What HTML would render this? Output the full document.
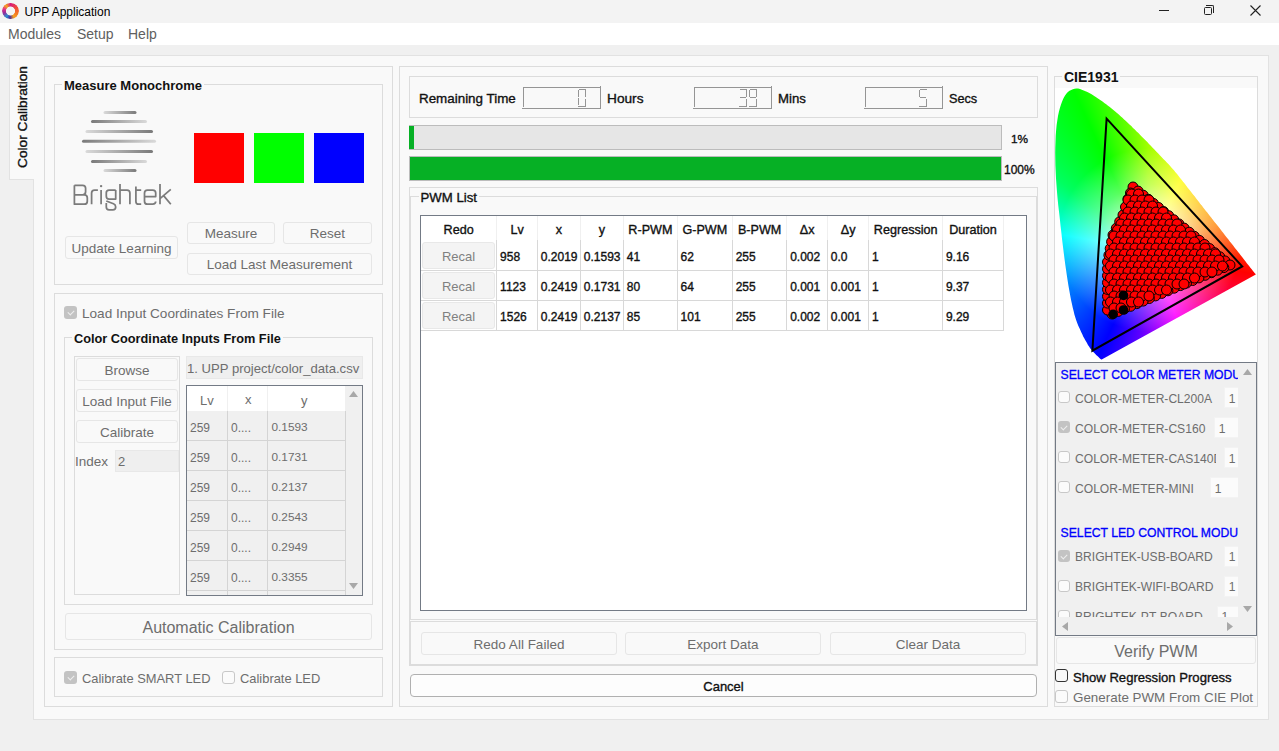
<!DOCTYPE html>
<html><head><meta charset="utf-8">
<style>
*{box-sizing:border-box;margin:0;padding:0}
html,body{width:1279px;height:751px;overflow:hidden;background:#f0f0f0;font-family:"Liberation Sans",sans-serif;font-size:13px;color:#000}
.a{position:absolute}
.t{position:absolute;white-space:nowrap;line-height:1}
.gb{position:absolute;border:1px solid #dcdcdc}
.btn{position:absolute;border:1px solid #e6e6e6;border-radius:3px;background:#f9f9f9;color:#6d6d6d;text-align:center;white-space:nowrap;font-size:13.5px;padding-top:1px}
.sb{-webkit-text-stroke:0.35px currentColor}
.cb{position:absolute;width:13px;height:13px;border:1px solid #c8c8c8;border-radius:3px;background:#fbfbfb}
.cbc{position:absolute;width:13px;height:13px;border-radius:3px;background:#c3c3c3}
.cbc:after{content:"";position:absolute;left:3px;top:2px;width:5px;height:3px;border-left:1px solid #eee;border-bottom:1px solid #eee;transform:rotate(-45deg);transform-origin:center;top:4px;left:3.5px}
.g{color:#6d6d6d}
</style></head><body>
<!-- title bar -->
<div class="a" style="left:0;top:0;width:1279px;height:23px;background:#f3f3f3"></div>
<div class="a" style="left:2px;top:2.5px;width:16.5px;height:16.5px;border-radius:50%;background:conic-gradient(#d81b7a 0deg,#f04a3a 60deg,#f57f20 120deg,#f7a020 150deg,#4a2a98 185deg,#2a8fd0 215deg,#9a2a98 255deg,#e0308a 285deg,#f7a81b 320deg,#d81b7a 360deg);-webkit-mask:radial-gradient(circle,transparent 4.2px,#000 4.8px)"></div>
<div class="t" style="left:24.5px;top:6px;font-size:12px;color:#000">UPP Application</div>
<div class="a" style="left:1159px;top:10px;width:10px;height:1px;background:#222"></div>
<div class="a" style="left:1204px;top:7px;width:8px;height:8px;border:1px solid #222;border-radius:1.5px"></div>
<div class="a" style="left:1206px;top:5px;width:8px;height:8px;border-top:1px solid #222;border-right:1px solid #222;border-radius:0 2px 0 0"></div>
<svg class="a" style="left:1250px;top:5px" width="11" height="11" viewBox="0 0 11 11"><path d="M0.5 0.5 L10.5 10.5 M10.5 0.5 L0.5 10.5" stroke="#222" stroke-width="1.1"/></svg>
<!-- menu -->
<div class="a" style="left:0;top:23px;width:1279px;height:22px;background:#fff"></div>
<div class="t" style="left:8px;top:27px;font-size:14px;color:#606060">Modules</div>
<div class="t" style="left:77px;top:27px;font-size:14px;color:#606060">Setup</div>
<div class="t" style="left:128px;top:27px;font-size:14px;color:#606060">Help</div>

<!-- tab widget -->
<div class="a" style="left:33px;top:55px;width:1236px;height:665px;background:#f9f9f9;border:1px solid #e2e2e2"></div>
<div class="a" style="left:9px;top:55px;width:25px;height:125px;background:#f9f9f9;border:1px solid #e2e2e2;border-right:none"></div>
<div class="t sb" style="left:16px;top:168px;font-size:13.7px;transform:rotate(-90deg);transform-origin:0 0;color:#111">Color Calibration</div>

<!-- LEFT PANEL -->
<div class="gb" style="left:44px;top:66px;width:349px;height:641px"></div>
<!-- Measure monochrome -->
<div class="gb" style="left:54px;top:84px;width:329px;height:201px"></div>
<div class="t" style="left:62px;top:79px;font-size:13px;font-weight:bold;background:#f9f9f9;padding:0 2px;color:#111">Measure Monochrome</div>
<svg class="a" style="left:80px;top:108px" width="80" height="68" viewBox="0 0 80 68">
<defs>
<linearGradient id="lg1" gradientUnits="objectBoundingBox" x1="0" x2="1" y1="0" y2="0"><stop offset="0" stop-color="#dadada"/><stop offset="1" stop-color="#7a7a7a"/></linearGradient>
<linearGradient id="lg2" gradientUnits="objectBoundingBox" x1="0" x2="1" y1="0" y2="0"><stop offset="0" stop-color="#7a7a7a"/><stop offset="1" stop-color="#dadada"/></linearGradient>
</defs>
<rect x="23.5" y="3" width="33" height="3" rx="1.5" fill="url(#lg1)"/>
<rect x="11" y="12" width="56" height="3" rx="1.5" fill="url(#lg2)"/>
<rect x="5.5" y="22" width="67.5" height="3" rx="1.5" fill="url(#lg1)"/>
<rect x="2" y="31.7" width="74" height="3" rx="1.5" fill="url(#lg2)"/>
<rect x="5.5" y="42" width="67.5" height="3" rx="1.5" fill="url(#lg1)"/>
<rect x="11" y="52" width="56" height="3" rx="1.5" fill="url(#lg2)"/>
<rect x="23.5" y="61" width="33" height="3" rx="1.5" fill="url(#lg1)"/>
</svg>
<svg class="a" style="left:0;top:0" width="200" height="220" viewBox="0 0 200 220"><g fill="none" stroke="#7b7b7b" stroke-width="1.75" stroke-linecap="butt" stroke-linejoin="round">
<path d="M74.4,185.3 H82.6 Q85.6,185.3 85.6,188.3 V191.8 Q85.6,194.8 82.6,194.8 H74.4 M82.6,194.8 H84.3 Q87.3,194.8 87.3,197.8 V201.2 Q87.3,204.2 84.3,204.2 H74.4 V185.3"/>
<path d="M91.6,204.2 V193 Q91.6,190 94.6,190 H97.9"/>
<path d="M101.1,190 V204.2"/>
<path d="M115.7,190 H109.1 Q106.3,190 106.3,192.8 V196.2 Q106.3,199 109.1,199 H115.7 V190 M106.3,201 L113.5,203.7 Q115.7,204.6 115.7,207 Q115.7,209.8 112.9,209.8 H109.1 Q106.3,209.8 106.3,207 V203"/>
<path d="M120,184 V204.2 M120,190 H127 Q129.9,190 129.9,193 V204.2"/>
<path d="M135.9,186.4 V201.4 Q135.9,204.2 138.7,204.2 H141.2 M135.9,190 H141.2"/>
<path d="M144.5,196.5 H155.7 V193 Q155.7,190 152.7,190 H147.5 Q144.5,190 144.5,193 V201.2 Q144.5,204.2 147.5,204.2 H152.7 Q155.7,204.2 155.7,201.6"/>
<path d="M160,184 V204.2 M160,198.6 L170.8,189.4 M163.6,195.6 L170.8,204.2"/>
</g><circle cx="101.1" cy="186.1" r="1.2" fill="#7b7b7b"/></svg>
<div class="a" style="left:194px;top:133px;width:50px;height:50px;background:#ff0000"></div>
<div class="a" style="left:254px;top:133px;width:50px;height:50px;background:#00ff00"></div>
<div class="a" style="left:314px;top:133px;width:50px;height:50px;background:#0000ff"></div>
<div class="btn" style="left:65px;top:236px;width:113px;height:23px;line-height:21px">Update Learning</div>
<div class="btn" style="left:187px;top:222px;width:88px;height:22px;line-height:20px">Measure</div>
<div class="btn" style="left:283px;top:222px;width:89px;height:22px;line-height:20px">Reset</div>
<div class="btn" style="left:187px;top:253px;width:185px;height:22px;line-height:20px">Load Last Measurement</div>

<!-- Load input group -->
<div class="gb" style="left:54px;top:293px;width:329px;height:357px"></div>
<div class="cbc" style="left:64px;top:306px"></div>
<div class="t g" style="left:82px;top:307px;font-size:13.6px">Load Input Coordinates From File</div>
<div class="gb" style="left:64px;top:337px;width:309px;height:268px"></div>
<div class="t" style="left:72px;top:333px;font-size:12.75px;font-weight:bold;background:#f9f9f9;padding:0 2px;color:#111">Color Coordinate Inputs From File</div>
<div class="gb" style="left:74px;top:356px;width:106px;height:239px"></div>
<div class="btn" style="left:76px;top:358px;width:102px;height:23px;line-height:21px">Browse</div>
<div class="btn" style="left:76px;top:389px;width:102px;height:23px;line-height:21px">Load Input File</div>
<div class="btn" style="left:76px;top:420px;width:102px;height:23px;line-height:21px">Calibrate</div>
<div class="t g" style="left:75px;top:455px;font-size:13.5px">Index</div>
<div class="a" style="left:115px;top:450px;width:64px;height:22px;background:#efefef;border:1px solid #e8e8e8"></div>
<div class="t g" style="left:118px;top:455px;font-size:13px">2</div>
<div class="a" style="left:186px;top:356px;width:177px;height:23px;background:#efefef;border:1px solid #e8e8e8"></div>
<div class="t g" style="left:187px;top:362px;font-size:13.1px">1. UPP project/color_data.csv</div>

<!-- small table -->
<div class="a" style="left:186px;top:385px;width:177px;height:211px;border:1px solid #737a85;background:#f0f0f0;overflow:hidden">
  <div class="a" style="left:0;top:0;width:158px;height:25px;background:#fff"></div>
  <div class="a" style="left:40px;top:0;width:1px;height:210px;background:#d4d4d4"></div>
  <div class="a" style="left:80px;top:0;width:1px;height:210px;background:#d4d4d4"></div>
  <div class="a" style="left:0;top:0;width:158px;height:25px;background:#fff"></div>
  <div class="a" style="left:40px;top:0;width:1px;height:25px;background:#f0f0f0"></div>
  <div class="a" style="left:80px;top:0;width:1px;height:25px;background:#f0f0f0"></div>
  <div class="a" style="left:157.5px;top:25px;width:1px;height:190px;background:#d4d4d4"></div>
  <div class="t g" style="left:13px;top:8px;font-size:13px">Lv</div>
  <div class="t g" style="left:58px;top:7px;font-size:13px">x</div>
  <div class="t g" style="left:114px;top:8px;font-size:13px">y</div>
</div>
<div class="a" style="left:187px;top:440px;width:158px;height:1px;background:#d4d4d4"></div>
<div class="t g" style="left:190px;top:421.5px;font-size:12px">259</div>
<div class="t g" style="left:231px;top:421.5px;font-size:12px">0....</div>
<div class="t g" style="left:271.5px;top:421.5px;font-size:11.8px">0.1593</div>
<div class="a" style="left:187px;top:470px;width:158px;height:1px;background:#d4d4d4"></div>
<div class="t g" style="left:190px;top:451.5px;font-size:12px">259</div>
<div class="t g" style="left:231px;top:451.5px;font-size:12px">0....</div>
<div class="t g" style="left:271.5px;top:451.5px;font-size:11.8px">0.1731</div>
<div class="a" style="left:187px;top:500px;width:158px;height:1px;background:#d4d4d4"></div>
<div class="t g" style="left:190px;top:481.5px;font-size:12px">259</div>
<div class="t g" style="left:231px;top:481.5px;font-size:12px">0....</div>
<div class="t g" style="left:271.5px;top:481.5px;font-size:11.8px">0.2137</div>
<div class="a" style="left:187px;top:530px;width:158px;height:1px;background:#d4d4d4"></div>
<div class="t g" style="left:190px;top:511.5px;font-size:12px">259</div>
<div class="t g" style="left:231px;top:511.5px;font-size:12px">0....</div>
<div class="t g" style="left:271.5px;top:511.5px;font-size:11.8px">0.2543</div>
<div class="a" style="left:187px;top:560px;width:158px;height:1px;background:#d4d4d4"></div>
<div class="t g" style="left:190px;top:541.5px;font-size:12px">259</div>
<div class="t g" style="left:231px;top:541.5px;font-size:12px">0....</div>
<div class="t g" style="left:271.5px;top:541.5px;font-size:11.8px">0.2949</div>
<div class="a" style="left:187px;top:590px;width:158px;height:1px;background:#d4d4d4"></div>
<div class="t g" style="left:190px;top:571.5px;font-size:12px">259</div>
<div class="t g" style="left:231px;top:571.5px;font-size:12px">0....</div>
<div class="t g" style="left:271.5px;top:571.5px;font-size:11.8px">0.3355</div>
<div class="a" style="left:187px;top:620px;width:158px;height:1px;background:#d4d4d4"></div>
<svg class="a" style="left:348px;top:390px" width="11" height="8"><path d="M5.5 1 L10 7 L1 7 Z" fill="#a8a8a8"/></svg>
<svg class="a" style="left:348px;top:582px" width="11" height="8"><path d="M1 1 L10 1 L5.5 7 Z" fill="#a8a8a8"/></svg>

<div class="btn" style="left:65px;top:613px;width:307px;height:27px;line-height:25px;font-size:16px">Automatic Calibration</div>

<!-- calibrate LED group -->
<div class="gb" style="left:54px;top:657px;width:329px;height:40px"></div>
<div class="cbc" style="left:64px;top:671px"></div>
<div class="t g" style="left:82px;top:673px;font-size:12.9px">Calibrate SMART LED</div>
<div class="cb" style="left:222px;top:671px"></div>
<div class="t g" style="left:240px;top:673px;font-size:12.9px">Calibrate LED</div>

<!-- MIDDLE PANEL -->
<div class="gb" style="left:399px;top:66px;width:649px;height:641px"></div>
<div class="gb" style="left:409px;top:76px;width:629px;height:42px"></div>
<div class="t sb" style="left:419px;top:92px;font-size:13.4px;color:#111">Remaining Time</div>
<div class="a" style="left:523px;top:87px;width:77px;height:20px;border-top:1px solid #959595;border-left:1px solid #959595"></div>
<div class="a" style="left:522px;top:86px;width:79px;height:23px;border-right:1px solid #959595;border-bottom:1px solid #959595"></div>
<div class="a" style="left:579px;top:89px;width:7px;height:1px;background:#959595"></div>
<div class="a" style="left:585px;top:90px;width:1px;height:7px;background:#959595"></div>
<div class="a" style="left:585px;top:99px;width:1px;height:7px;background:#959595"></div>
<div class="a" style="left:578px;top:106px;width:8px;height:1px;background:#959595"></div>
<div class="a" style="left:578px;top:98px;width:1px;height:7px;background:#959595"></div>
<div class="a" style="left:578px;top:90px;width:1px;height:7px;background:#959595"></div>
<div class="a" style="left:694px;top:87px;width:77px;height:20px;border-top:1px solid #959595;border-left:1px solid #959595"></div>
<div class="a" style="left:693px;top:86px;width:79px;height:23px;border-right:1px solid #959595;border-bottom:1px solid #959595"></div>
<div class="a" style="left:740px;top:89px;width:7px;height:1px;background:#959595"></div>
<div class="a" style="left:746px;top:90px;width:1px;height:7px;background:#959595"></div>
<div class="a" style="left:746px;top:99px;width:1px;height:7px;background:#959595"></div>
<div class="a" style="left:739px;top:106px;width:8px;height:1px;background:#959595"></div>
<div class="a" style="left:740px;top:97px;width:6px;height:1px;background:#959595"></div>
<div class="a" style="left:750px;top:89px;width:7px;height:1px;background:#959595"></div>
<div class="a" style="left:756px;top:90px;width:1px;height:7px;background:#959595"></div>
<div class="a" style="left:756px;top:99px;width:1px;height:7px;background:#959595"></div>
<div class="a" style="left:749px;top:106px;width:8px;height:1px;background:#959595"></div>
<div class="a" style="left:749px;top:90px;width:1px;height:7px;background:#959595"></div>
<div class="a" style="left:750px;top:97px;width:6px;height:1px;background:#959595"></div>
<div class="a" style="left:865px;top:87px;width:77px;height:20px;border-top:1px solid #959595;border-left:1px solid #959595"></div>
<div class="a" style="left:864px;top:86px;width:79px;height:23px;border-right:1px solid #959595;border-bottom:1px solid #959595"></div>
<div class="a" style="left:920px;top:89px;width:7px;height:1px;background:#959595"></div>
<div class="a" style="left:926px;top:99px;width:1px;height:7px;background:#959595"></div>
<div class="a" style="left:919px;top:106px;width:8px;height:1px;background:#959595"></div>
<div class="a" style="left:919px;top:90px;width:1px;height:7px;background:#959595"></div>
<div class="a" style="left:920px;top:97px;width:6px;height:1px;background:#959595"></div>
<div class="t sb" style="left:607px;top:92px;font-size:13.7px;color:#111">Hours</div>
<div class="t sb" style="left:778px;top:92px;font-size:13.2px;color:#111">Mins</div>
<div class="t sb" style="left:949px;top:92.5px;font-size:12.7px;color:#111">Secs</div>

<div class="a" style="left:409px;top:125px;width:593px;height:25px;background:#e6e6e6;border:1px solid #bcbcbc"></div>
<div class="a" style="left:409px;top:126px;width:5px;height:23px;background:#06b025"></div>
<div class="t sb" style="left:1011px;top:133.5px;font-size:11.8px;color:#111">1%</div>
<div class="a" style="left:409px;top:156px;width:593px;height:25px;background:#06b025;border:1px solid #bcbcbc"></div>
<div class="t sb" style="left:1004px;top:164px;font-size:12px;color:#111">100%</div>

<div class="gb" style="left:409px;top:187px;width:629px;height:479px"></div>
<div class="gb" style="left:410px;top:196px;width:627px;height:424px"></div>
<div class="t sb" style="left:418.5px;top:191px;font-size:13.2px;color:#111;background:#f9f9f9;padding:0 2px">PWM List</div>
<div class="a" style="left:420px;top:215px;width:607px;height:396px;background:#fff;border:1px solid #737a85"></div>
<div class="a" style="left:496px;top:216px;width:1px;height:24px;background:#f0f0f0"></div>
<div class="a" style="left:496px;top:240px;width:1px;height:90px;background:#d8d8d8"></div>
<div class="a" style="left:537px;top:216px;width:1px;height:24px;background:#f0f0f0"></div>
<div class="a" style="left:537px;top:240px;width:1px;height:90px;background:#d8d8d8"></div>
<div class="a" style="left:580px;top:216px;width:1px;height:24px;background:#f0f0f0"></div>
<div class="a" style="left:580px;top:240px;width:1px;height:90px;background:#d8d8d8"></div>
<div class="a" style="left:623px;top:216px;width:1px;height:24px;background:#f0f0f0"></div>
<div class="a" style="left:623px;top:240px;width:1px;height:90px;background:#d8d8d8"></div>
<div class="a" style="left:677px;top:216px;width:1px;height:24px;background:#f0f0f0"></div>
<div class="a" style="left:677px;top:240px;width:1px;height:90px;background:#d8d8d8"></div>
<div class="a" style="left:732px;top:216px;width:1px;height:24px;background:#f0f0f0"></div>
<div class="a" style="left:732px;top:240px;width:1px;height:90px;background:#d8d8d8"></div>
<div class="a" style="left:786px;top:216px;width:1px;height:24px;background:#f0f0f0"></div>
<div class="a" style="left:786px;top:240px;width:1px;height:90px;background:#d8d8d8"></div>
<div class="a" style="left:827px;top:216px;width:1px;height:24px;background:#f0f0f0"></div>
<div class="a" style="left:827px;top:240px;width:1px;height:90px;background:#d8d8d8"></div>
<div class="a" style="left:868px;top:216px;width:1px;height:24px;background:#f0f0f0"></div>
<div class="a" style="left:868px;top:240px;width:1px;height:90px;background:#d8d8d8"></div>
<div class="a" style="left:942px;top:216px;width:1px;height:24px;background:#f0f0f0"></div>
<div class="a" style="left:942px;top:240px;width:1px;height:90px;background:#d8d8d8"></div>
<div class="a" style="left:1003px;top:216px;width:1px;height:24px;background:#f0f0f0"></div>
<div class="a" style="left:1003px;top:240px;width:1px;height:90px;background:#d8d8d8"></div>
<div class="a" style="left:421px;top:270px;width:583px;height:1px;background:#d8d8d8"></div>
<div class="a" style="left:421px;top:300px;width:583px;height:1px;background:#d8d8d8"></div>
<div class="a" style="left:421px;top:330px;width:583px;height:1px;background:#d8d8d8"></div>
<div class="t sb" style="left:420.5px;width:76.3px;text-align:center;top:223.5px;font-size:12.6px;color:#111">Redo</div>
<div class="t sb" style="left:496.8px;width:40.7px;text-align:center;top:223.5px;font-size:12.6px;color:#111">Lv</div>
<div class="t sb" style="left:537.5px;width:43.0px;text-align:center;top:223.5px;font-size:12.6px;color:#111">x</div>
<div class="t sb" style="left:580.5px;width:43.0px;text-align:center;top:223.5px;font-size:12.6px;color:#111">y</div>
<div class="t sb" style="left:623.5px;width:53.8px;text-align:center;top:223.5px;font-size:12.6px;color:#111">R-PWM</div>
<div class="t sb" style="left:677.3px;width:55.1px;text-align:center;top:223.5px;font-size:12.6px;color:#111">G-PWM</div>
<div class="t sb" style="left:732.4px;width:54.5px;text-align:center;top:223.5px;font-size:12.6px;color:#111">B-PWM</div>
<div class="t sb" style="left:786.9px;width:40.6px;text-align:center;top:223.5px;font-size:12.6px;color:#111">Δx</div>
<div class="t sb" style="left:827.5px;width:41.3px;text-align:center;top:223.5px;font-size:12.6px;color:#111">Δy</div>
<div class="t sb" style="left:868.8px;width:73.8px;text-align:center;top:223.5px;font-size:12.6px;color:#111">Regression</div>
<div class="t sb" style="left:942.6px;width:60.8px;text-align:center;top:223.5px;font-size:12.6px;color:#111">Duration</div>
<div class="btn" style="left:422px;top:242px;width:73px;height:27px;line-height:26px;color:#808080;background:#f4f4f4;border-color:#e8e8e8;font-size:13px">Recal</div>
<div class="t sb" style="left:500.1px;top:251px;font-size:12px;color:#111">958</div>
<div class="t sb" style="left:540.8px;top:251px;font-size:12px;color:#111">0.2019</div>
<div class="t sb" style="left:583.8px;top:251px;font-size:12px;color:#111">0.1593</div>
<div class="t sb" style="left:626.8px;top:251px;font-size:12px;color:#111">41</div>
<div class="t sb" style="left:680.6px;top:251px;font-size:12px;color:#111">62</div>
<div class="t sb" style="left:735.7px;top:251px;font-size:12px;color:#111">255</div>
<div class="t sb" style="left:790.2px;top:251px;font-size:12px;color:#111">0.002</div>
<div class="t sb" style="left:830.8px;top:251px;font-size:12px;color:#111">0.0</div>
<div class="t sb" style="left:872.1px;top:251px;font-size:12px;color:#111">1</div>
<div class="t sb" style="left:945.9px;top:251px;font-size:12px;color:#111">9.16</div>
<div class="btn" style="left:422px;top:272px;width:73px;height:27px;line-height:26px;color:#808080;background:#f4f4f4;border-color:#e8e8e8;font-size:13px">Recal</div>
<div class="t sb" style="left:500.1px;top:281px;font-size:12px;color:#111">1123</div>
<div class="t sb" style="left:540.8px;top:281px;font-size:12px;color:#111">0.2419</div>
<div class="t sb" style="left:583.8px;top:281px;font-size:12px;color:#111">0.1731</div>
<div class="t sb" style="left:626.8px;top:281px;font-size:12px;color:#111">80</div>
<div class="t sb" style="left:680.6px;top:281px;font-size:12px;color:#111">64</div>
<div class="t sb" style="left:735.7px;top:281px;font-size:12px;color:#111">255</div>
<div class="t sb" style="left:790.2px;top:281px;font-size:12px;color:#111">0.001</div>
<div class="t sb" style="left:830.8px;top:281px;font-size:12px;color:#111">0.001</div>
<div class="t sb" style="left:872.1px;top:281px;font-size:12px;color:#111">1</div>
<div class="t sb" style="left:945.9px;top:281px;font-size:12px;color:#111">9.37</div>
<div class="btn" style="left:422px;top:302px;width:73px;height:27px;line-height:26px;color:#808080;background:#f4f4f4;border-color:#e8e8e8;font-size:13px">Recal</div>
<div class="t sb" style="left:500.1px;top:311px;font-size:12px;color:#111">1526</div>
<div class="t sb" style="left:540.8px;top:311px;font-size:12px;color:#111">0.2419</div>
<div class="t sb" style="left:583.8px;top:311px;font-size:12px;color:#111">0.2137</div>
<div class="t sb" style="left:626.8px;top:311px;font-size:12px;color:#111">85</div>
<div class="t sb" style="left:680.6px;top:311px;font-size:12px;color:#111">101</div>
<div class="t sb" style="left:735.7px;top:311px;font-size:12px;color:#111">255</div>
<div class="t sb" style="left:790.2px;top:311px;font-size:12px;color:#111">0.002</div>
<div class="t sb" style="left:830.8px;top:311px;font-size:12px;color:#111">0.001</div>
<div class="t sb" style="left:872.1px;top:311px;font-size:12px;color:#111">1</div>
<div class="t sb" style="left:945.9px;top:311px;font-size:12px;color:#111">9.29</div>
<div class="gb" style="left:410px;top:621px;width:627px;height:44px"></div>
<div class="btn" style="left:421px;top:632px;width:196px;height:23px;line-height:21px">Redo All Failed</div>
<div class="btn" style="left:625px;top:632px;width:196px;height:23px;line-height:21px">Export Data</div>
<div class="btn" style="left:830px;top:632px;width:196px;height:23px;line-height:21px">Clear Data</div>
<div class="btn sb" style="left:410px;top:674px;width:627px;height:23px;line-height:22px;border-color:#b0b0b0;background:#fdfdfd;color:#111;border-radius:4px;font-size:13px">Cancel</div>

<!-- RIGHT PANEL -->
<div class="gb" style="left:1054px;top:76px;width:204px;height:631px"></div>
<div class="t" style="left:1062px;top:70px;font-size:14px;font-weight:bold;color:#111;background:#f9f9f9;padding:0 2px">CIE1931</div>
<div class="a" style="left:1055px;top:88px;width:202px;height:275px;background:#fff;overflow:hidden">
<div class="a" style="left:0;top:0;width:202px;height:275px;clip-path:polygon(46.7px 271.4px,46.7px 271.4px,46.7px 271.4px,46.6px 271.4px,46.6px 271.4px,46.6px 271.4px,46.5px 271.4px,46.4px 271.4px,46.4px 271.4px,46.3px 271.4px,46.2px 271.4px,46.1px 271.4px,46.0px 271.3px,45.9px 271.3px,45.8px 271.2px,45.7px 271.1px,45.5px 271.0px,45.4px 270.9px,45.2px 270.7px,45.1px 270.6px,44.9px 270.4px,44.7px 270.2px,44.4px 270.0px,44.2px 269.7px,43.9px 269.4px,43.6px 269.1px,43.2px 268.8px,42.9px 268.5px,42.5px 268.1px,42.0px 267.7px,41.5px 267.2px,41.0px 266.7px,40.3px 266.0px,39.6px 265.3px,38.9px 264.6px,38.3px 263.9px,37.7px 263.3px,37.2px 262.7px,36.8px 262.2px,36.4px 261.8px,36.0px 261.2px,35.5px 260.7px,35.0px 260.0px,34.5px 259.2px,33.9px 258.3px,33.3px 257.4px,32.7px 256.4px,32.1px 255.3px,31.4px 254.1px,30.6px 252.8px,29.9px 251.4px,29.1px 250.0px,28.2px 248.4px,27.4px 246.6px,26.5px 244.7px,25.5px 242.6px,24.5px 240.3px,23.4px 238.0px,22.4px 235.4px,21.3px 232.6px,20.4px 229.7px,19.4px 226.5px,18.6px 223.1px,17.7px 219.5px,16.9px 215.8px,16.0px 211.7px,15.2px 207.5px,14.4px 202.9px,13.5px 198.1px,12.7px 193.1px,11.9px 187.8px,11.1px 182.3px,10.3px 176.7px,9.5px 170.7px,8.7px 164.5px,7.9px 158.1px,7.1px 151.5px,6.4px 144.9px,5.6px 138.2px,4.9px 131.5px,4.1px 124.6px,3.3px 117.7px,2.6px 110.7px,2.0px 103.9px,1.5px 97.2px,1.0px 90.6px,0.7px 84.0px,0.4px 77.5px,0.3px 71.2px,0.2px 65.0px,0.3px 59.1px,0.5px 53.4px,0.7px 47.8px,1.1px 42.4px,1.6px 37.3px,2.3px 32.5px,3.0px 28.0px,3.9px 23.8px,4.9px 20.0px,6.0px 16.4px,7.2px 13.2px,8.5px 10.3px,9.9px 7.8px,11.3px 5.7px,12.9px 4.1px,14.5px 2.8px,16.2px 1.9px,17.9px 1.2px,19.6px 0.7px,21.3px 0.5px,23.1px 0.6px,25.0px 1.1px,26.8px 1.7px,28.7px 2.4px,30.5px 3.2px,32.4px 4.0px,34.3px 5.0px,36.2px 6.1px,38.1px 7.3px,40.0px 8.6px,41.9px 9.8px,43.7px 11.0px,45.6px 12.3px,47.5px 13.6px,49.3px 15.0px,51.2px 16.3px,53.0px 17.7px,54.8px 19.1px,56.6px 20.6px,58.4px 22.1px,60.2px 23.6px,62.0px 25.1px,63.8px 26.6px,65.6px 28.2px,67.4px 29.8px,69.1px 31.4px,70.9px 33.1px,72.7px 34.8px,74.5px 36.4px,76.3px 38.1px,78.0px 39.9px,79.8px 41.6px,81.6px 43.4px,83.4px 45.1px,85.2px 46.9px,86.9px 48.7px,88.7px 50.5px,90.5px 52.3px,92.3px 54.1px,94.0px 56.0px,95.8px 57.8px,97.6px 59.7px,99.4px 61.5px,101.2px 63.4px,103.0px 65.3px,104.8px 67.2px,106.5px 69.0px,108.3px 70.9px,110.2px 72.8px,112.0px 74.7px,113.8px 76.6px,115.5px 78.5px,117.2px 80.4px,118.9px 82.3px,120.4px 84.2px,122.0px 86.1px,123.5px 88.0px,125.0px 89.9px,126.5px 91.8px,128.0px 93.7px,129.5px 95.6px,131.0px 97.5px,132.4px 99.4px,133.9px 101.2px,135.3px 103.1px,136.8px 105.0px,138.2px 106.8px,139.7px 108.6px,141.1px 110.5px,142.5px 112.3px,143.9px 114.1px,145.3px 115.9px,146.7px 117.6px,148.1px 119.4px,149.5px 121.2px,150.8px 122.9px,152.2px 124.6px,153.5px 126.3px,154.8px 128.0px,156.1px 129.6px,157.4px 131.3px,158.7px 132.9px,159.9px 134.5px,161.2px 136.0px,162.4px 137.6px,163.6px 139.1px,164.8px 140.6px,165.9px 142.1px,167.0px 143.5px,168.1px 144.8px,169.0px 146.0px,169.9px 147.2px,170.9px 148.4px,171.9px 149.8px,173.2px 151.3px,174.6px 153.2px,176.3px 155.3px,178.1px 157.6px,179.9px 159.9px,181.6px 162.0px,183.1px 163.9px,184.4px 165.6px,185.5px 167.0px,186.5px 168.3px,187.5px 169.6px,188.6px 170.9px,189.6px 172.3px,190.8px 173.8px,192.0px 175.4px,193.3px 177.0px,194.5px 178.5px,195.6px 180.0px,196.7px 181.3px,197.6px 182.4px,198.4px 183.4px,199.2px 184.4px,199.8px 185.2px,200.4px 185.8px,200.8px 186.4px);background:radial-gradient(circle at 95px 152px, rgba(255,255,255,0.95) 0px, rgba(255,255,255,0.75) 28px, rgba(255,255,255,0.35) 56px, rgba(255,255,255,0) 92px),conic-gradient(from 0deg at 93px 162px, #a0ff00 0deg, #ffff00 25deg, #ff8000 70deg, #ff0000 103deg, #ff0060 125deg, #ff00ff 157deg, #6000ff 185deg, #0000ff 205deg, #0080ff 245deg, #00ffff 280deg, #00ff60 308deg, #00ff00 335deg, #a0ff00 360deg)"></div>
<svg class="a" style="left:0;top:0" width="202" height="275"><circle cx="78.0" cy="99.0" r="5" fill="#ff0000" stroke="#000" stroke-width="1"/><circle cx="83.1" cy="103.1" r="5" fill="#ff0000" stroke="#000" stroke-width="1"/><circle cx="88.2" cy="107.2" r="5" fill="#ff0000" stroke="#000" stroke-width="1"/><circle cx="93.3" cy="111.3" r="5" fill="#ff0000" stroke="#000" stroke-width="1"/><circle cx="98.4" cy="115.4" r="5" fill="#ff0000" stroke="#000" stroke-width="1"/><circle cx="103.5" cy="119.5" r="5" fill="#ff0000" stroke="#000" stroke-width="1"/><circle cx="108.6" cy="123.6" r="5" fill="#ff0000" stroke="#000" stroke-width="1"/><circle cx="113.7" cy="127.7" r="5" fill="#ff0000" stroke="#000" stroke-width="1"/><circle cx="118.8" cy="131.8" r="5" fill="#ff0000" stroke="#000" stroke-width="1"/><circle cx="123.9" cy="135.9" r="5" fill="#ff0000" stroke="#000" stroke-width="1"/><circle cx="129.1" cy="140.1" r="5" fill="#ff0000" stroke="#000" stroke-width="1"/><circle cx="134.2" cy="144.2" r="5" fill="#ff0000" stroke="#000" stroke-width="1"/><circle cx="139.3" cy="148.3" r="5" fill="#ff0000" stroke="#000" stroke-width="1"/><circle cx="144.4" cy="152.4" r="5" fill="#ff0000" stroke="#000" stroke-width="1"/><circle cx="149.5" cy="156.5" r="5" fill="#ff0000" stroke="#000" stroke-width="1"/><circle cx="154.6" cy="160.6" r="5" fill="#ff0000" stroke="#000" stroke-width="1"/><circle cx="159.7" cy="164.7" r="5" fill="#ff0000" stroke="#000" stroke-width="1"/><circle cx="164.8" cy="168.8" r="5" fill="#ff0000" stroke="#000" stroke-width="1"/><circle cx="169.9" cy="172.9" r="5" fill="#ff0000" stroke="#000" stroke-width="1"/><circle cx="175.0" cy="177.0" r="5" fill="#ff0000" stroke="#000" stroke-width="1"/><circle cx="168.8" cy="179.6" r="5" fill="#ff0000" stroke="#000" stroke-width="1"/><circle cx="162.6" cy="182.2" r="5" fill="#ff0000" stroke="#000" stroke-width="1"/><circle cx="156.4" cy="184.7" r="5" fill="#ff0000" stroke="#000" stroke-width="1"/><circle cx="150.2" cy="187.3" r="5" fill="#ff0000" stroke="#000" stroke-width="1"/><circle cx="143.9" cy="189.9" r="5" fill="#ff0000" stroke="#000" stroke-width="1"/><circle cx="137.7" cy="192.5" r="5" fill="#ff0000" stroke="#000" stroke-width="1"/><circle cx="131.5" cy="195.1" r="5" fill="#ff0000" stroke="#000" stroke-width="1"/><circle cx="125.3" cy="197.6" r="5" fill="#ff0000" stroke="#000" stroke-width="1"/><circle cx="119.1" cy="200.2" r="5" fill="#ff0000" stroke="#000" stroke-width="1"/><circle cx="112.9" cy="202.8" r="5" fill="#ff0000" stroke="#000" stroke-width="1"/><circle cx="106.7" cy="205.4" r="5" fill="#ff0000" stroke="#000" stroke-width="1"/><circle cx="100.5" cy="207.9" r="5" fill="#ff0000" stroke="#000" stroke-width="1"/><circle cx="94.3" cy="210.5" r="5" fill="#ff0000" stroke="#000" stroke-width="1"/><circle cx="88.1" cy="213.1" r="5" fill="#ff0000" stroke="#000" stroke-width="1"/><circle cx="81.8" cy="215.7" r="5" fill="#ff0000" stroke="#000" stroke-width="1"/><circle cx="75.6" cy="218.3" r="5" fill="#ff0000" stroke="#000" stroke-width="1"/><circle cx="69.4" cy="220.8" r="5" fill="#ff0000" stroke="#000" stroke-width="1"/><circle cx="63.2" cy="223.4" r="5" fill="#ff0000" stroke="#000" stroke-width="1"/><circle cx="57.0" cy="226.0" r="5" fill="#ff0000" stroke="#000" stroke-width="1"/><circle cx="52.5" cy="222.0" r="5" fill="#ff0000" stroke="#000" stroke-width="1"/><circle cx="52.5" cy="215.1" r="5" fill="#ff0000" stroke="#000" stroke-width="1"/><circle cx="52.5" cy="208.3" r="5" fill="#ff0000" stroke="#000" stroke-width="1"/><circle cx="52.5" cy="201.4" r="5" fill="#ff0000" stroke="#000" stroke-width="1"/><circle cx="52.5" cy="194.6" r="5" fill="#ff0000" stroke="#000" stroke-width="1"/><circle cx="52.5" cy="187.7" r="5" fill="#ff0000" stroke="#000" stroke-width="1"/><circle cx="52.5" cy="180.9" r="5" fill="#ff0000" stroke="#000" stroke-width="1"/><circle cx="52.5" cy="174.0" r="5" fill="#ff0000" stroke="#000" stroke-width="1"/><circle cx="53.9" cy="167.2" r="5" fill="#ff0000" stroke="#000" stroke-width="1"/><circle cx="55.2" cy="160.5" r="5" fill="#ff0000" stroke="#000" stroke-width="1"/><circle cx="56.6" cy="153.8" r="5" fill="#ff0000" stroke="#000" stroke-width="1"/><circle cx="58.0" cy="147.0" r="5" fill="#ff0000" stroke="#000" stroke-width="1"/><circle cx="61.3" cy="140.3" r="5" fill="#ff0000" stroke="#000" stroke-width="1"/><circle cx="64.7" cy="133.7" r="5" fill="#ff0000" stroke="#000" stroke-width="1"/><circle cx="68.0" cy="127.0" r="5" fill="#ff0000" stroke="#000" stroke-width="1"/><circle cx="70.5" cy="119.0" r="5" fill="#ff0000" stroke="#000" stroke-width="1"/><circle cx="73.0" cy="111.0" r="5" fill="#ff0000" stroke="#000" stroke-width="1"/><circle cx="75.5" cy="105.0" r="5" fill="#ff0000" stroke="#000" stroke-width="1"/><circle cx="76.5" cy="106.0" r="5" fill="#ff0000" stroke="#000" stroke-width="1"/><circle cx="83.5" cy="106.0" r="5" fill="#ff0000" stroke="#000" stroke-width="1"/><circle cx="73.0" cy="112.0" r="5" fill="#ff0000" stroke="#000" stroke-width="1"/><circle cx="80.0" cy="112.0" r="5" fill="#ff0000" stroke="#000" stroke-width="1"/><circle cx="87.0" cy="112.0" r="5" fill="#ff0000" stroke="#000" stroke-width="1"/><circle cx="94.0" cy="112.0" r="5" fill="#ff0000" stroke="#000" stroke-width="1"/><circle cx="76.5" cy="118.0" r="5" fill="#ff0000" stroke="#000" stroke-width="1"/><circle cx="83.5" cy="118.0" r="5" fill="#ff0000" stroke="#000" stroke-width="1"/><circle cx="90.5" cy="118.0" r="5" fill="#ff0000" stroke="#000" stroke-width="1"/><circle cx="97.5" cy="118.0" r="5" fill="#ff0000" stroke="#000" stroke-width="1"/><circle cx="73.0" cy="124.0" r="5" fill="#ff0000" stroke="#000" stroke-width="1"/><circle cx="80.0" cy="124.0" r="5" fill="#ff0000" stroke="#000" stroke-width="1"/><circle cx="87.0" cy="124.0" r="5" fill="#ff0000" stroke="#000" stroke-width="1"/><circle cx="94.0" cy="124.0" r="5" fill="#ff0000" stroke="#000" stroke-width="1"/><circle cx="101.0" cy="124.0" r="5" fill="#ff0000" stroke="#000" stroke-width="1"/><circle cx="108.0" cy="124.0" r="5" fill="#ff0000" stroke="#000" stroke-width="1"/><circle cx="69.5" cy="130.0" r="5" fill="#ff0000" stroke="#000" stroke-width="1"/><circle cx="76.5" cy="130.0" r="5" fill="#ff0000" stroke="#000" stroke-width="1"/><circle cx="83.5" cy="130.0" r="5" fill="#ff0000" stroke="#000" stroke-width="1"/><circle cx="90.5" cy="130.0" r="5" fill="#ff0000" stroke="#000" stroke-width="1"/><circle cx="97.5" cy="130.0" r="5" fill="#ff0000" stroke="#000" stroke-width="1"/><circle cx="104.5" cy="130.0" r="5" fill="#ff0000" stroke="#000" stroke-width="1"/><circle cx="111.5" cy="130.0" r="5" fill="#ff0000" stroke="#000" stroke-width="1"/><circle cx="66.0" cy="136.0" r="5" fill="#ff0000" stroke="#000" stroke-width="1"/><circle cx="73.0" cy="136.0" r="5" fill="#ff0000" stroke="#000" stroke-width="1"/><circle cx="80.0" cy="136.0" r="5" fill="#ff0000" stroke="#000" stroke-width="1"/><circle cx="87.0" cy="136.0" r="5" fill="#ff0000" stroke="#000" stroke-width="1"/><circle cx="94.0" cy="136.0" r="5" fill="#ff0000" stroke="#000" stroke-width="1"/><circle cx="101.0" cy="136.0" r="5" fill="#ff0000" stroke="#000" stroke-width="1"/><circle cx="108.0" cy="136.0" r="5" fill="#ff0000" stroke="#000" stroke-width="1"/><circle cx="115.0" cy="136.0" r="5" fill="#ff0000" stroke="#000" stroke-width="1"/><circle cx="122.0" cy="136.0" r="5" fill="#ff0000" stroke="#000" stroke-width="1"/><circle cx="62.5" cy="142.0" r="5" fill="#ff0000" stroke="#000" stroke-width="1"/><circle cx="69.5" cy="142.0" r="5" fill="#ff0000" stroke="#000" stroke-width="1"/><circle cx="76.5" cy="142.0" r="5" fill="#ff0000" stroke="#000" stroke-width="1"/><circle cx="83.5" cy="142.0" r="5" fill="#ff0000" stroke="#000" stroke-width="1"/><circle cx="90.5" cy="142.0" r="5" fill="#ff0000" stroke="#000" stroke-width="1"/><circle cx="97.5" cy="142.0" r="5" fill="#ff0000" stroke="#000" stroke-width="1"/><circle cx="104.5" cy="142.0" r="5" fill="#ff0000" stroke="#000" stroke-width="1"/><circle cx="111.5" cy="142.0" r="5" fill="#ff0000" stroke="#000" stroke-width="1"/><circle cx="118.5" cy="142.0" r="5" fill="#ff0000" stroke="#000" stroke-width="1"/><circle cx="125.5" cy="142.0" r="5" fill="#ff0000" stroke="#000" stroke-width="1"/><circle cx="59.0" cy="148.0" r="5" fill="#ff0000" stroke="#000" stroke-width="1"/><circle cx="66.0" cy="148.0" r="5" fill="#ff0000" stroke="#000" stroke-width="1"/><circle cx="73.0" cy="148.0" r="5" fill="#ff0000" stroke="#000" stroke-width="1"/><circle cx="80.0" cy="148.0" r="5" fill="#ff0000" stroke="#000" stroke-width="1"/><circle cx="87.0" cy="148.0" r="5" fill="#ff0000" stroke="#000" stroke-width="1"/><circle cx="94.0" cy="148.0" r="5" fill="#ff0000" stroke="#000" stroke-width="1"/><circle cx="101.0" cy="148.0" r="5" fill="#ff0000" stroke="#000" stroke-width="1"/><circle cx="108.0" cy="148.0" r="5" fill="#ff0000" stroke="#000" stroke-width="1"/><circle cx="115.0" cy="148.0" r="5" fill="#ff0000" stroke="#000" stroke-width="1"/><circle cx="122.0" cy="148.0" r="5" fill="#ff0000" stroke="#000" stroke-width="1"/><circle cx="129.0" cy="148.0" r="5" fill="#ff0000" stroke="#000" stroke-width="1"/><circle cx="136.0" cy="148.0" r="5" fill="#ff0000" stroke="#000" stroke-width="1"/><circle cx="62.5" cy="154.0" r="5" fill="#ff0000" stroke="#000" stroke-width="1"/><circle cx="69.5" cy="154.0" r="5" fill="#ff0000" stroke="#000" stroke-width="1"/><circle cx="76.5" cy="154.0" r="5" fill="#ff0000" stroke="#000" stroke-width="1"/><circle cx="83.5" cy="154.0" r="5" fill="#ff0000" stroke="#000" stroke-width="1"/><circle cx="90.5" cy="154.0" r="5" fill="#ff0000" stroke="#000" stroke-width="1"/><circle cx="97.5" cy="154.0" r="5" fill="#ff0000" stroke="#000" stroke-width="1"/><circle cx="104.5" cy="154.0" r="5" fill="#ff0000" stroke="#000" stroke-width="1"/><circle cx="111.5" cy="154.0" r="5" fill="#ff0000" stroke="#000" stroke-width="1"/><circle cx="118.5" cy="154.0" r="5" fill="#ff0000" stroke="#000" stroke-width="1"/><circle cx="125.5" cy="154.0" r="5" fill="#ff0000" stroke="#000" stroke-width="1"/><circle cx="132.5" cy="154.0" r="5" fill="#ff0000" stroke="#000" stroke-width="1"/><circle cx="139.5" cy="154.0" r="5" fill="#ff0000" stroke="#000" stroke-width="1"/><circle cx="59.0" cy="160.0" r="5" fill="#ff0000" stroke="#000" stroke-width="1"/><circle cx="66.0" cy="160.0" r="5" fill="#ff0000" stroke="#000" stroke-width="1"/><circle cx="73.0" cy="160.0" r="5" fill="#ff0000" stroke="#000" stroke-width="1"/><circle cx="80.0" cy="160.0" r="5" fill="#ff0000" stroke="#000" stroke-width="1"/><circle cx="87.0" cy="160.0" r="5" fill="#ff0000" stroke="#000" stroke-width="1"/><circle cx="94.0" cy="160.0" r="5" fill="#ff0000" stroke="#000" stroke-width="1"/><circle cx="101.0" cy="160.0" r="5" fill="#ff0000" stroke="#000" stroke-width="1"/><circle cx="108.0" cy="160.0" r="5" fill="#ff0000" stroke="#000" stroke-width="1"/><circle cx="115.0" cy="160.0" r="5" fill="#ff0000" stroke="#000" stroke-width="1"/><circle cx="122.0" cy="160.0" r="5" fill="#ff0000" stroke="#000" stroke-width="1"/><circle cx="129.0" cy="160.0" r="5" fill="#ff0000" stroke="#000" stroke-width="1"/><circle cx="136.0" cy="160.0" r="5" fill="#ff0000" stroke="#000" stroke-width="1"/><circle cx="143.0" cy="160.0" r="5" fill="#ff0000" stroke="#000" stroke-width="1"/><circle cx="150.0" cy="160.0" r="5" fill="#ff0000" stroke="#000" stroke-width="1"/><circle cx="55.5" cy="166.0" r="5" fill="#ff0000" stroke="#000" stroke-width="1"/><circle cx="62.5" cy="166.0" r="5" fill="#ff0000" stroke="#000" stroke-width="1"/><circle cx="69.5" cy="166.0" r="5" fill="#ff0000" stroke="#000" stroke-width="1"/><circle cx="76.5" cy="166.0" r="5" fill="#ff0000" stroke="#000" stroke-width="1"/><circle cx="83.5" cy="166.0" r="5" fill="#ff0000" stroke="#000" stroke-width="1"/><circle cx="90.5" cy="166.0" r="5" fill="#ff0000" stroke="#000" stroke-width="1"/><circle cx="97.5" cy="166.0" r="5" fill="#ff0000" stroke="#000" stroke-width="1"/><circle cx="104.5" cy="166.0" r="5" fill="#ff0000" stroke="#000" stroke-width="1"/><circle cx="111.5" cy="166.0" r="5" fill="#ff0000" stroke="#000" stroke-width="1"/><circle cx="118.5" cy="166.0" r="5" fill="#ff0000" stroke="#000" stroke-width="1"/><circle cx="125.5" cy="166.0" r="5" fill="#ff0000" stroke="#000" stroke-width="1"/><circle cx="132.5" cy="166.0" r="5" fill="#ff0000" stroke="#000" stroke-width="1"/><circle cx="139.5" cy="166.0" r="5" fill="#ff0000" stroke="#000" stroke-width="1"/><circle cx="146.5" cy="166.0" r="5" fill="#ff0000" stroke="#000" stroke-width="1"/><circle cx="153.5" cy="166.0" r="5" fill="#ff0000" stroke="#000" stroke-width="1"/><circle cx="160.5" cy="166.0" r="5" fill="#ff0000" stroke="#000" stroke-width="1"/><circle cx="59.0" cy="172.0" r="5" fill="#ff0000" stroke="#000" stroke-width="1"/><circle cx="66.0" cy="172.0" r="5" fill="#ff0000" stroke="#000" stroke-width="1"/><circle cx="73.0" cy="172.0" r="5" fill="#ff0000" stroke="#000" stroke-width="1"/><circle cx="80.0" cy="172.0" r="5" fill="#ff0000" stroke="#000" stroke-width="1"/><circle cx="87.0" cy="172.0" r="5" fill="#ff0000" stroke="#000" stroke-width="1"/><circle cx="94.0" cy="172.0" r="5" fill="#ff0000" stroke="#000" stroke-width="1"/><circle cx="101.0" cy="172.0" r="5" fill="#ff0000" stroke="#000" stroke-width="1"/><circle cx="108.0" cy="172.0" r="5" fill="#ff0000" stroke="#000" stroke-width="1"/><circle cx="115.0" cy="172.0" r="5" fill="#ff0000" stroke="#000" stroke-width="1"/><circle cx="122.0" cy="172.0" r="5" fill="#ff0000" stroke="#000" stroke-width="1"/><circle cx="129.0" cy="172.0" r="5" fill="#ff0000" stroke="#000" stroke-width="1"/><circle cx="136.0" cy="172.0" r="5" fill="#ff0000" stroke="#000" stroke-width="1"/><circle cx="143.0" cy="172.0" r="5" fill="#ff0000" stroke="#000" stroke-width="1"/><circle cx="150.0" cy="172.0" r="5" fill="#ff0000" stroke="#000" stroke-width="1"/><circle cx="157.0" cy="172.0" r="5" fill="#ff0000" stroke="#000" stroke-width="1"/><circle cx="164.0" cy="172.0" r="5" fill="#ff0000" stroke="#000" stroke-width="1"/><circle cx="55.5" cy="178.0" r="5" fill="#ff0000" stroke="#000" stroke-width="1"/><circle cx="62.5" cy="178.0" r="5" fill="#ff0000" stroke="#000" stroke-width="1"/><circle cx="69.5" cy="178.0" r="5" fill="#ff0000" stroke="#000" stroke-width="1"/><circle cx="76.5" cy="178.0" r="5" fill="#ff0000" stroke="#000" stroke-width="1"/><circle cx="83.5" cy="178.0" r="5" fill="#ff0000" stroke="#000" stroke-width="1"/><circle cx="90.5" cy="178.0" r="5" fill="#ff0000" stroke="#000" stroke-width="1"/><circle cx="97.5" cy="178.0" r="5" fill="#ff0000" stroke="#000" stroke-width="1"/><circle cx="104.5" cy="178.0" r="5" fill="#ff0000" stroke="#000" stroke-width="1"/><circle cx="111.5" cy="178.0" r="5" fill="#ff0000" stroke="#000" stroke-width="1"/><circle cx="118.5" cy="178.0" r="5" fill="#ff0000" stroke="#000" stroke-width="1"/><circle cx="125.5" cy="178.0" r="5" fill="#ff0000" stroke="#000" stroke-width="1"/><circle cx="132.5" cy="178.0" r="5" fill="#ff0000" stroke="#000" stroke-width="1"/><circle cx="139.5" cy="178.0" r="5" fill="#ff0000" stroke="#000" stroke-width="1"/><circle cx="146.5" cy="178.0" r="5" fill="#ff0000" stroke="#000" stroke-width="1"/><circle cx="153.5" cy="178.0" r="5" fill="#ff0000" stroke="#000" stroke-width="1"/><circle cx="160.5" cy="178.0" r="5" fill="#ff0000" stroke="#000" stroke-width="1"/><circle cx="167.5" cy="178.0" r="5" fill="#ff0000" stroke="#000" stroke-width="1"/><circle cx="59.0" cy="184.0" r="5" fill="#ff0000" stroke="#000" stroke-width="1"/><circle cx="66.0" cy="184.0" r="5" fill="#ff0000" stroke="#000" stroke-width="1"/><circle cx="73.0" cy="184.0" r="5" fill="#ff0000" stroke="#000" stroke-width="1"/><circle cx="80.0" cy="184.0" r="5" fill="#ff0000" stroke="#000" stroke-width="1"/><circle cx="87.0" cy="184.0" r="5" fill="#ff0000" stroke="#000" stroke-width="1"/><circle cx="94.0" cy="184.0" r="5" fill="#ff0000" stroke="#000" stroke-width="1"/><circle cx="101.0" cy="184.0" r="5" fill="#ff0000" stroke="#000" stroke-width="1"/><circle cx="108.0" cy="184.0" r="5" fill="#ff0000" stroke="#000" stroke-width="1"/><circle cx="115.0" cy="184.0" r="5" fill="#ff0000" stroke="#000" stroke-width="1"/><circle cx="122.0" cy="184.0" r="5" fill="#ff0000" stroke="#000" stroke-width="1"/><circle cx="129.0" cy="184.0" r="5" fill="#ff0000" stroke="#000" stroke-width="1"/><circle cx="136.0" cy="184.0" r="5" fill="#ff0000" stroke="#000" stroke-width="1"/><circle cx="143.0" cy="184.0" r="5" fill="#ff0000" stroke="#000" stroke-width="1"/><circle cx="150.0" cy="184.0" r="5" fill="#ff0000" stroke="#000" stroke-width="1"/><circle cx="157.0" cy="184.0" r="5" fill="#ff0000" stroke="#000" stroke-width="1"/><circle cx="55.5" cy="190.0" r="5" fill="#ff0000" stroke="#000" stroke-width="1"/><circle cx="62.5" cy="190.0" r="5" fill="#ff0000" stroke="#000" stroke-width="1"/><circle cx="69.5" cy="190.0" r="5" fill="#ff0000" stroke="#000" stroke-width="1"/><circle cx="76.5" cy="190.0" r="5" fill="#ff0000" stroke="#000" stroke-width="1"/><circle cx="83.5" cy="190.0" r="5" fill="#ff0000" stroke="#000" stroke-width="1"/><circle cx="90.5" cy="190.0" r="5" fill="#ff0000" stroke="#000" stroke-width="1"/><circle cx="97.5" cy="190.0" r="5" fill="#ff0000" stroke="#000" stroke-width="1"/><circle cx="104.5" cy="190.0" r="5" fill="#ff0000" stroke="#000" stroke-width="1"/><circle cx="111.5" cy="190.0" r="5" fill="#ff0000" stroke="#000" stroke-width="1"/><circle cx="118.5" cy="190.0" r="5" fill="#ff0000" stroke="#000" stroke-width="1"/><circle cx="125.5" cy="190.0" r="5" fill="#ff0000" stroke="#000" stroke-width="1"/><circle cx="132.5" cy="190.0" r="5" fill="#ff0000" stroke="#000" stroke-width="1"/><circle cx="139.5" cy="190.0" r="5" fill="#ff0000" stroke="#000" stroke-width="1"/><circle cx="59.0" cy="196.0" r="5" fill="#ff0000" stroke="#000" stroke-width="1"/><circle cx="66.0" cy="196.0" r="5" fill="#ff0000" stroke="#000" stroke-width="1"/><circle cx="73.0" cy="196.0" r="5" fill="#ff0000" stroke="#000" stroke-width="1"/><circle cx="80.0" cy="196.0" r="5" fill="#ff0000" stroke="#000" stroke-width="1"/><circle cx="87.0" cy="196.0" r="5" fill="#ff0000" stroke="#000" stroke-width="1"/><circle cx="94.0" cy="196.0" r="5" fill="#ff0000" stroke="#000" stroke-width="1"/><circle cx="101.0" cy="196.0" r="5" fill="#ff0000" stroke="#000" stroke-width="1"/><circle cx="108.0" cy="196.0" r="5" fill="#ff0000" stroke="#000" stroke-width="1"/><circle cx="115.0" cy="196.0" r="5" fill="#ff0000" stroke="#000" stroke-width="1"/><circle cx="122.0" cy="196.0" r="5" fill="#ff0000" stroke="#000" stroke-width="1"/><circle cx="129.0" cy="196.0" r="5" fill="#ff0000" stroke="#000" stroke-width="1"/><circle cx="55.5" cy="202.0" r="5" fill="#ff0000" stroke="#000" stroke-width="1"/><circle cx="62.5" cy="202.0" r="5" fill="#ff0000" stroke="#000" stroke-width="1"/><circle cx="69.5" cy="202.0" r="5" fill="#ff0000" stroke="#000" stroke-width="1"/><circle cx="76.5" cy="202.0" r="5" fill="#ff0000" stroke="#000" stroke-width="1"/><circle cx="83.5" cy="202.0" r="5" fill="#ff0000" stroke="#000" stroke-width="1"/><circle cx="90.5" cy="202.0" r="5" fill="#ff0000" stroke="#000" stroke-width="1"/><circle cx="97.5" cy="202.0" r="5" fill="#ff0000" stroke="#000" stroke-width="1"/><circle cx="104.5" cy="202.0" r="5" fill="#ff0000" stroke="#000" stroke-width="1"/><circle cx="111.5" cy="202.0" r="5" fill="#ff0000" stroke="#000" stroke-width="1"/><circle cx="59.0" cy="208.0" r="5" fill="#ff0000" stroke="#000" stroke-width="1"/><circle cx="66.0" cy="208.0" r="5" fill="#ff0000" stroke="#000" stroke-width="1"/><circle cx="73.0" cy="208.0" r="5" fill="#ff0000" stroke="#000" stroke-width="1"/><circle cx="80.0" cy="208.0" r="5" fill="#ff0000" stroke="#000" stroke-width="1"/><circle cx="87.0" cy="208.0" r="5" fill="#ff0000" stroke="#000" stroke-width="1"/><circle cx="94.0" cy="208.0" r="5" fill="#ff0000" stroke="#000" stroke-width="1"/><circle cx="55.5" cy="214.0" r="5" fill="#ff0000" stroke="#000" stroke-width="1"/><circle cx="62.5" cy="214.0" r="5" fill="#ff0000" stroke="#000" stroke-width="1"/><circle cx="69.5" cy="214.0" r="5" fill="#ff0000" stroke="#000" stroke-width="1"/><circle cx="76.5" cy="214.0" r="5" fill="#ff0000" stroke="#000" stroke-width="1"/><circle cx="83.5" cy="214.0" r="5" fill="#ff0000" stroke="#000" stroke-width="1"/><circle cx="59.0" cy="220.0" r="5" fill="#ff0000" stroke="#000" stroke-width="1"/><circle cx="66.0" cy="220.0" r="5" fill="#ff0000" stroke="#000" stroke-width="1"/><circle cx="68.5" cy="207.4" r="4.8" fill="#000"/><circle cx="68.5" cy="222.0" r="4.8" fill="#000"/><circle cx="58.1" cy="226.4" r="4.8" fill="#000"/><polygon points="51.6,30.6 187.2,178.4 37.4,262.7" fill="none" stroke="#000" stroke-width="2"/></svg>
</div>

<div class="a" style="left:1055px;top:362px;width:202px;height:274px;border:1px solid #737a85;background:#f0f0f0;overflow:hidden">
<div class="a" style="left:0;top:0;width:182px;height:254px;overflow:hidden">
<div class="t" style="left:4.599999999999909px;top:6px;font-size:12.2px;color:#0000ff;-webkit-text-stroke:0.3px #0000ff">SELECT COLOR METER MODULE</div>
<div class="cb" style="left:1.7px;top:28px;width:12px;height:12px"></div>
<div class="t g" style="left:19px;top:29.5px;font-size:12.1px;width:141px;overflow:hidden;line-height:1.15">COLOR-METER-CL200A</div>
<div class="a" style="left:167.7px;top:24px;width:40px;height:21px;background:#fbfbfb;border:1px solid #f3f3f3"></div>
<div class="t g" style="left:172.7px;top:29.5px;font-size:12.1px">1</div>
<div class="cbc" style="left:1.7px;top:58px;width:12px;height:12px"></div>
<div class="t g" style="left:19px;top:59.5px;font-size:12.1px;width:131px;overflow:hidden;line-height:1.15">COLOR-METER-CS160</div>
<div class="a" style="left:157.7px;top:54px;width:40px;height:21px;background:#fbfbfb;border:1px solid #f3f3f3"></div>
<div class="t g" style="left:162.7px;top:59.5px;font-size:12.1px">1</div>
<div class="cb" style="left:1.7px;top:88px;width:12px;height:12px"></div>
<div class="t g" style="left:19px;top:89.5px;font-size:12.1px;width:141px;overflow:hidden;line-height:1.15">COLOR-METER-CAS140D</div>
<div class="a" style="left:167.7px;top:84px;width:40px;height:21px;background:#fbfbfb;border:1px solid #f3f3f3"></div>
<div class="t g" style="left:172.7px;top:89.5px;font-size:12.1px">1</div>
<div class="cb" style="left:1.7px;top:118px;width:12px;height:12px"></div>
<div class="t g" style="left:19px;top:119.5px;font-size:12.1px;width:127px;overflow:hidden;line-height:1.15">COLOR-METER-MINI</div>
<div class="a" style="left:153.8px;top:114px;width:40px;height:21px;background:#fbfbfb;border:1px solid #f3f3f3"></div>
<div class="t g" style="left:158.8px;top:119.5px;font-size:12.1px">1</div>
<div class="t" style="left:4.599999999999909px;top:164px;font-size:12.2px;color:#0000ff;-webkit-text-stroke:0.3px #0000ff">SELECT LED CONTROL MODULE</div>
<div class="cbc" style="left:1.7px;top:186.6px;width:12px;height:12px"></div>
<div class="t g" style="left:19px;top:188.1px;font-size:12.1px;width:141px;overflow:hidden;line-height:1.15">BRIGHTEK-USB-BOARD</div>
<div class="a" style="left:167.7px;top:182.6px;width:40px;height:21px;background:#fbfbfb;border:1px solid #f3f3f3"></div>
<div class="t g" style="left:172.7px;top:188.1px;font-size:12.1px">1</div>
<div class="cb" style="left:1.7px;top:216.6px;width:12px;height:12px"></div>
<div class="t g" style="left:19px;top:218.1px;font-size:12.1px;width:141px;overflow:hidden;line-height:1.15">BRIGHTEK-WIFI-BOARD</div>
<div class="a" style="left:167.7px;top:212.6px;width:40px;height:21px;background:#fbfbfb;border:1px solid #f3f3f3"></div>
<div class="t g" style="left:172.7px;top:218.1px;font-size:12.1px">1</div>
<div class="cb" style="left:1.7px;top:246.6px;width:12px;height:12px"></div>
<div class="t g" style="left:19px;top:248.1px;font-size:12.1px;width:134px;overflow:hidden;line-height:1.15">BRIGHTEK-PT-BOARD</div>
<div class="a" style="left:160.5px;top:242.6px;width:40px;height:21px;background:#fbfbfb;border:1px solid #f3f3f3"></div>
<div class="t g" style="left:165.5px;top:248.1px;font-size:12.1px">1</div>
</div>
<svg class="a" style="left:186px;top:5px" width="11" height="8"><path d="M5.5 1 L10 7 L1 7 Z" fill="#a8a8a8"/></svg>
<svg class="a" style="left:186px;top:242px" width="11" height="8"><path d="M1 1 L10 1 L5.5 7 Z" fill="#a8a8a8"/></svg>
<svg class="a" style="left:5px;top:258px" width="8" height="11"><path d="M7 1 L7 10 L1 5.5 Z" fill="#a8a8a8"/></svg>
<svg class="a" style="left:170px;top:258px" width="8" height="11"><path d="M1 1 L7 5.5 L1 10 Z" fill="#a8a8a8"/></svg>
</div>
<div class="btn" style="left:1056px;top:637px;width:200px;height:27px;line-height:25px;font-size:16px">Verify PWM</div>
<div class="cb" style="left:1055px;top:669px;border-color:#333;background:#f8f8f8"></div>
<div class="t sb" style="left:1073px;top:670.5px;font-size:13.1px;color:#111">Show Regression Progress</div>
<div class="cb" style="left:1055px;top:690px"></div>
<div class="t g" style="left:1073px;top:691px;font-size:13.4px">Generate PWM From CIE Plot</div>
</body></html>
